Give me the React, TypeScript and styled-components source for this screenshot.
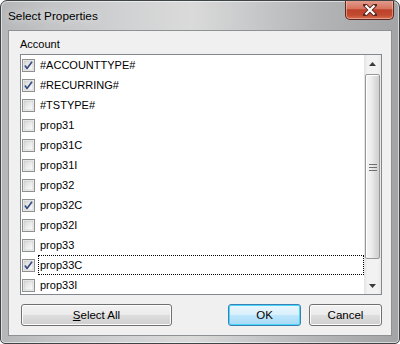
import React from 'react'
import styled, {createGlobalStyle, css} from 'styled-components'

const GlobalStyle = createGlobalStyle`
  html, body {
    margin: 0;
    padding: 0;
    background: #ffffff;
  }
  body {
    font-family: 'Liberation Sans', Arial, sans-serif;
  }
`

const items: {label: string; checked: boolean; focused?: boolean}[] = [
  {label: '#ACCOUNTTYPE#', checked: true},
  {label: '#RECURRING#', checked: true},
  {label: '#TSTYPE#', checked: false},
  {label: 'prop31', checked: false},
  {label: 'prop31C', checked: false},
  {label: 'prop31I', checked: false},
  {label: 'prop32', checked: false},
  {label: 'prop32C', checked: true},
  {label: 'prop32I', checked: false},
  {label: 'prop33', checked: false},
  {label: 'prop33C', checked: true, focused: true},
  {label: 'prop33I', checked: false},
]

const Window = styled.div`
  box-sizing: border-box;
  width: 400px;
  height: 344px;
  display: flex;
  flex-direction: column;
  border: 1px solid #3f4447;
  border-radius: 7px 7px 5px 5px;
  overflow: hidden;
  background: linear-gradient(
    90deg,
    #b4b6b8 0%,
    #c2c4c6 12%,
    #d0d1d2 30%,
    #dadada 48%,
    #c9cacb 62%,
    #b3b4b5 80%,
    #a2a4a6 100%
  );
  box-shadow: inset 0 0 0 1px rgba(255, 255, 255, 0.55);
`

const TitleBar = styled.div`
  height: 29px;
  flex: none;
  display: flex;
  justify-content: space-between;
  align-items: flex-start;
`

const Title = styled.span`
  padding: 8px 0 0 7px;
  font-size: 11.8px;
  color: #000;
  text-shadow: 0 0 8px rgba(255, 255, 255, 0.9);
`

const CloseButton = styled.div`
  box-sizing: border-box;
  width: 49px;
  height: 20px;
  margin: -1px 5px 0 0;
  display: flex;
  align-items: center;
  justify-content: center;
  border: 1px solid #5b2a22;
  border-top: none;
  border-radius: 0 0 5px 5px;
  background: linear-gradient(180deg, #e3a092 0%, #d7745f 45%, #bd4129 52%, #c24b32 80%, #d96f50 100%);
  box-shadow: inset 0 0 0 1px rgba(255, 220, 210, 0.45);
`

const Client = styled.div`
  flex: 1;
  margin: 0 7px 7px;
  display: flex;
  flex-direction: column;
  padding: 6px 9px 0 11px;
  border: 1px solid #8d9194;
  background: #f0f0f0;
`

const GroupLabel = styled.div`
  height: 15px;
  margin-bottom: 2px;
  font-size: 11px;
  line-height: 15px;
  color: #000;
`

const ListBox = styled.div`
  box-sizing: border-box;
  height: 241px;
  width: 362px;
  display: flex;
  border: 1px solid #828790;
  background: #ffffff;
`

const Rows = styled.div`
  flex: 1;
  overflow: hidden;
`

const Row = styled.div`
  height: 20px;
  display: flex;
  align-items: center;
  padding-left: 1px;
`

const ItemText = styled.div<{$focused?: boolean}>`
  box-sizing: border-box;
  flex: 1;
  height: 20px;
  margin-left: 3px;
  padding-left: 1px;
  font-size: 11px;
  line-height: 18px;
  color: #000;
  border: 1px solid transparent;
  ${p =>
    p.$focused &&
    css`
      border: 1px dotted #000;
    `}
`

const Scrollbar = styled.div`
  width: 17px;
  flex: none;
  display: flex;
  flex-direction: column;
  background: linear-gradient(90deg, #e3e3e3 0%, #f2f2f2 20%, #f2f2f2 80%, #e9e9e9 100%);
`

const ArrowButton = styled.div`
  height: 17px;
  flex: none;
  display: flex;
  align-items: center;
  justify-content: center;
`

const Thumb = styled.div`
  box-sizing: border-box;
  height: 185px;
  margin: 2px 1px 0;
  display: flex;
  align-items: center;
  justify-content: center;
  border: 1px solid #979797;
  border-radius: 2px;
  background: linear-gradient(90deg, #f5f5f5 0%, #ededed 40%, #dadada 75%, #cfcfcf 100%);
  box-shadow: inset 1px 1px 0 #ffffff;
`

const Track = styled.div`
  flex: 1;
`

const ButtonRow = styled.div`
  display: flex;
  margin-top: 9px;
  padding-left: 1px;
`

const PushButton = styled.div<{$width: number; $default?: boolean}>`
  box-sizing: border-box;
  width: ${p => p.$width}px;
  height: 22px;
  display: flex;
  align-items: center;
  justify-content: center;
  font-size: 11.5px;
  color: #000;
  border: 1px solid #707070;
  border-radius: 3px;
  background: linear-gradient(180deg, #f2f2f2 0%, #ebebeb 48%, #dddddd 52%, #cfcfcf 100%);
  box-shadow: inset 0 0 0 1px #fcfcfc;
  ${p =>
    p.$default &&
    css`
      border-color: #3c7fb1;
      background: linear-gradient(180deg, #eaf6fd 0%, #d9f0fc 48%, #bee6fd 52%, #a7d9f5 100%);
      box-shadow: inset 0 0 0 1px #48d8fb;
    `}
`

const Spacer = styled.div`
  flex: 1;
`

const ButtonGap = styled.div`
  width: 8px;
`

const Underline = styled.span`
  text-decoration: underline;
`

function CheckBox({checked}: {checked: boolean}) {
  return (
    <svg width="13" height="13" viewBox="0 0 13 13">
      <defs>
        <linearGradient id="cbfill" x1="0" y1="0" x2="1" y2="1">
          <stop offset="0" stopColor="#d6d6d6" />
          <stop offset="1" stopColor="#ffffff" />
        </linearGradient>
      </defs>
      <rect x="0.5" y="0.5" width="12" height="12" fill="#f4f4f4" stroke="#8e8f8f" />
      <rect x="2" y="2" width="9" height="9" fill="url(#cbfill)" stroke="#c2c2c2" strokeWidth="0.6" />
      {checked && (
        <path d="M3 6.6 L5 9.4 L10 2.8" fill="none" stroke="#3a4f87" strokeWidth="1.7" strokeLinejoin="round" />
      )}
    </svg>
  )
}

function CloseGlyph() {
  return (
    <svg width="14" height="12" viewBox="0 0 14 12">
      <path d="M2 1 L12 11 M12 1 L2 11" stroke="#5a2620" strokeWidth="4" strokeLinecap="square" />
      <path d="M2.5 1.5 L11.5 10.5 M11.5 1.5 L2.5 10.5" stroke="#ffffff" strokeWidth="2.2" />
    </svg>
  )
}

function ArrowGlyph({up}: {up: boolean}) {
  return (
    <svg width="7" height="4" viewBox="0 0 7 4">
      <path d={up ? 'M0 4 L3.5 0 L7 4 Z' : 'M0 0 L7 0 L3.5 4 Z'} fill="#3b3b3b" />
    </svg>
  )
}

function GripGlyph() {
  return (
    <svg width="8" height="8" viewBox="0 0 8 8">
      <path d="M0 1.5 H8 M0 4.5 H8 M0 7.5 H8" stroke="#6e6e6e" strokeWidth="1" />
    </svg>
  )
}

export default function App() {
  return (
    <>
      <GlobalStyle />
      <Window>
        <TitleBar>
          <Title>Select Properties</Title>
          <CloseButton>
            <CloseGlyph />
          </CloseButton>
        </TitleBar>
        <Client>
          <GroupLabel>Account</GroupLabel>
          <ListBox>
            <Rows>
              {items.map(item => (
                <Row key={item.label}>
                  <CheckBox checked={item.checked} />
                  <ItemText $focused={item.focused}>{item.label}</ItemText>
                </Row>
              ))}
            </Rows>
            <Scrollbar>
              <ArrowButton>
                <ArrowGlyph up />
              </ArrowButton>
              <Thumb>
                <GripGlyph />
              </Thumb>
              <Track />
              <ArrowButton>
                <ArrowGlyph up={false} />
              </ArrowButton>
            </Scrollbar>
          </ListBox>
          <ButtonRow>
            <PushButton $width={151}>
              <Underline>S</Underline>elect All
            </PushButton>
            <Spacer />
            <PushButton $width={73} $default>
              OK
            </PushButton>
            <ButtonGap />
            <PushButton $width={73}>Cancel</PushButton>
          </ButtonRow>
        </Client>
      </Window>
    </>
  )
}
